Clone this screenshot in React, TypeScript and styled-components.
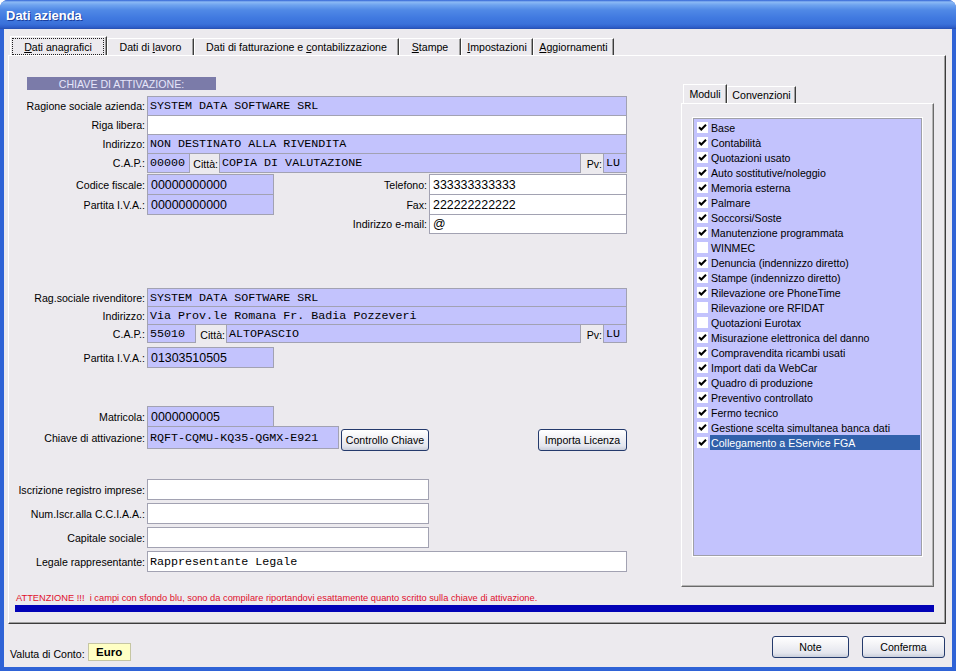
import React from 'react';
import styled, { createGlobalStyle } from 'styled-components';

const Global = createGlobalStyle`
  html, body { margin: 0; padding: 0; background: #ffffff; }
  #root { width: 956px; height: 671px; }
`;

const SANS = `"Liberation Sans", Arial, sans-serif`;
const MONO = `"Liberation Mono", "Courier New", monospace`;
const BG = '#ECEAEE';
const LAV = '#C3C3FD';

const Window = styled.div`
  width: 956px;
  height: 671px;
  box-sizing: border-box;
  display: flex;
  flex-direction: column;
  background: #2f63d6;
  border-radius: 8px 8px 0 0;
  overflow: hidden;
`;

const TitleBar = styled.div`
  height: 29px;
  flex: none;
  box-sizing: border-box;
  display: flex;
  align-items: center;
  padding: 2px 0 0 6px;
  background: linear-gradient(180deg, #2f62d4 0px, #8cbaf5 2px, #6ea3ef 5px, #5089e6 10px, #4079e0 18px, #3a71da 24px, #2f60cc 27px, #264fb0 29px);
  color: #ffffff;
  font: bold 13px ${SANS};
  text-shadow: 1px 1px 0 #1a3e9c;
`;

const Client = styled.div`
  flex: 1;
  margin: 0 4px 4px 4px;
  background: ${BG};
  display: flex;
  flex-direction: column;
  font-family: ${SANS};
  font-size: 10.6px;
  color: #000;
`;

const TabStrip = styled.div`
  display: flex;
  align-items: flex-end;
  height: 19px;
  margin: 7px 0 0 6px;
`;

const Tab = styled.div<{ $w: number; $active?: boolean; $h?: number }>`
  width: ${p => p.$w}px;
  height: ${p => (p.$h ? p.$h : p.$active ? 19 : 17)}px;
  box-sizing: border-box;
  flex: none;
  border-top: 1px solid #ffffff;
  border-left: 1px solid #ffffff;
  border-right: 1px solid #3c3c3c;
  box-shadow: inset -1px 0 0 #a0a0a0;
  display: flex;
  align-items: center;
  justify-content: center;
  white-space: pre;
  padding: ${p => (p.$active ? '1px 2px 0 1px' : '0')};
`;

const TabText = styled.span`
  white-space: pre;
`;

const Focus = styled.span`
  flex: 1;
  align-self: stretch;
  display: flex;
  align-items: center;
  justify-content: center;
  border: 1px dotted #202020;
`;

const Page = styled.div`
  margin: 0 6px 0 4px;
  height: 569px;
  box-sizing: border-box;
  border-top: 1px solid #ffffff;
  border-left: 1px solid #ffffff;
  border-right: 1px solid #3c3c3c;
  border-bottom: 1px solid #3c3c3c;
  box-shadow: inset -1px -1px 0 #a0a0a0;
  padding: 21px 11px 11px 6px;
  display: flex;
  flex-direction: column;
`;

const MainRow = styled.div`
  display: flex;
  height: 510px;
  flex: none;
`;

const LeftCol = styled.div`
  width: 612px;
  flex: none;
  display: flex;
  flex-direction: column;
`;

const SectionHeader = styled.div`
  margin-left: 12px;
  width: 189px;
  height: 13px;
  background: #7b7ba9;
  color: #e6e6fa;
  display: flex;
  align-items: center;
  justify-content: center;
  white-space: nowrap;
`;

const Row = styled.div<{ $h: number; $mt?: number }>`
  display: flex;
  height: ${p => p.$h}px;
  margin-top: ${p => p.$mt ?? 0}px;
  flex: none;
`;

const Label = styled.div<{ $w?: number }>`
  width: ${p => p.$w ?? 132}px;
  flex: none;
  box-sizing: border-box;
  padding-right: 2px;
  display: flex;
  align-items: center;
  justify-content: flex-end;
  white-space: nowrap;
`;

const InlineLabel = styled.div<{ $w: number }>`
  width: ${p => p.$w}px;
  flex: none;
  box-sizing: border-box;
  padding: 2px 1px 0 0;
  display: flex;
  align-items: center;
  justify-content: flex-end;
  white-space: nowrap;
`;

const Field = styled.div<{ $w: number; $white?: boolean; $mono?: boolean }>`
  width: ${p => p.$w}px;
  flex: none;
  box-sizing: border-box;
  border: 1px solid #a2a2b2;
  background: ${p => (p.$white ? '#ffffff' : LAV)};
  padding-left: ${p => (p.$mono ? 2 : 3)}px;
  display: flex;
  align-items: center;
  white-space: ${p => (p.$mono ? 'pre' : 'nowrap')};
  overflow: hidden;
  font-family: ${p => (p.$mono ? MONO : SANS)};
  font-size: ${p => (p.$mono ? '11.7px' : '12.4px')};
  color: #000;
`;

const TwoCols = styled.div`
  display: flex;
  margin-top: 1px;
`;

const SubCol = styled.div<{ $w: number }>`
  width: ${p => p.$w}px;
  flex: none;
  display: flex;
  flex-direction: column;
`;

const Button = styled.button<{ $w: number }>`
  width: ${p => p.$w}px;
  height: 22px;
  flex: none;
  box-sizing: border-box;
  border: 1px solid #243a6c;
  border-radius: 3px;
  background: linear-gradient(180deg, #ffffff 0%, #f4f4f7 35%, #e4e6ee 80%, #c9cedb 100%);
  font-family: ${SANS};
  font-size: 10.6px;
  color: #000;
  padding: 0;
  white-space: nowrap;
`;

const KeyButton = styled(Button)`
  margin: 3px 0 0 2px;
`;

const ImportButton = styled(Button)`
  margin: 3px 0 0 auto;
`;

const RightCol = styled.div`
  margin: 7px 0 0 54px;
  width: 253px;
  height: 503px;
  flex: none;
  display: flex;
  flex-direction: column;
`;

const InnerTabs = styled.div`
  display: flex;
  align-items: flex-end;
  height: 19px;
  padding-left: 2px;
  flex: none;
`;

const InnerPanel = styled.div`
  flex: 1;
  box-sizing: border-box;
  border-top: 1px solid #ffffff;
  border-left: 1px solid #ffffff;
  border-right: 1px solid #6a6a6a;
  border-bottom: 1px solid #6a6a6a;
  box-shadow: inset -1px -1px 0 #b4b4b4;
  padding: 14px 0 0 11px;
`;

const ListBox = styled.div`
  width: 229px;
  height: 438px;
  box-sizing: border-box;
  border: 1px solid #a0a0a8;
  box-shadow: 0 0 0 1px #ffffff;
  background: ${LAV};
  padding-top: 1px;
  display: flex;
  flex-direction: column;
`;

const Item = styled.div`
  height: 15px;
  display: flex;
  align-items: center;
  flex: none;
`;

const Box = styled.span`
  width: 11px;
  height: 11px;
  margin-left: 3px;
  flex: none;
  background: #ffffff;
  display: flex;
  align-items: center;
  justify-content: center;
`;

const ItemText = styled.span<{ $sel?: boolean }>`
  flex: 1;
  height: 15px;
  margin: 0 1px 0 2px;
  padding-left: 1px;
  display: flex;
  align-items: center;
  white-space: nowrap;
  background: ${p => (p.$sel ? '#3161ab' : 'transparent')};
  color: ${p => (p.$sel ? '#ffffff' : '#000')};
`;

const Warning = styled.div`
  margin-top: 6px;
  height: 11px;
  line-height: 11px;
  font-size: 9.3px;
  color: #e0102c;
  white-space: pre;
  padding-left: 1px;
`;

const BlueBar = styled.div`
  margin-top: 1px;
  height: 7px;
  background: #0202b6;
  flex: none;
`;

const Bottom = styled.div`
  flex: 1;
  display: flex;
  justify-content: space-between;
  align-items: flex-start;
`;

const Valuta = styled.div`
  display: flex;
  align-items: flex-end;
  gap: 3px;
  margin: 19px 0 0 6px;
  white-space: nowrap;
`;

const ValutaLabel = styled.span`
  line-height: 13px;
  font-size: 10.6px;
`;

const EuroBox = styled.div`
  width: 43px;
  height: 18px;
  box-sizing: border-box;
  border: 1px solid #c6c6a2;
  background: #ffffc4;
  display: flex;
  align-items: center;
  justify-content: center;
  font: bold 11.5px ${SANS};
`;

const Buttons = styled.div`
  display: flex;
  gap: 13px;
  margin: 12px 7px 0 0;
`;

const U = styled.span`
  text-decoration: underline;
`;

const Check: React.FC = () => (
  <svg width="9" height="9" viewBox="0 0 9 9">
    <path d="M1 4.2 L3.3 6.5 L8 1.8" fill="none" stroke="#000" strokeWidth="2" />
  </svg>
);

const modules: [string, boolean][] = [
  ['Base', true],
  ['Contabilità', true],
  ['Quotazioni usato', true],
  ['Auto sostitutive/noleggio', true],
  ['Memoria esterna', true],
  ['Palmare', true],
  ['Soccorsi/Soste', true],
  ['Manutenzione programmata', true],
  ['WINMEC', false],
  ['Denuncia (indennizzo diretto)', true],
  ['Stampe (indennizzo diretto)', true],
  ['Rilevazione ore PhoneTime', true],
  ['Rilevazione ore RFIDAT', false],
  ['Quotazioni Eurotax', false],
  ['Misurazione elettronica del danno', true],
  ['Compravendita ricambi usati', true],
  ['Import dati da WebCar', true],
  ['Quadro di produzione', true],
  ['Preventivo controllato', true],
  ['Fermo tecnico', true],
  ['Gestione scelta simultanea banca dati', true],
  ['Collegamento a EService FGA', true],
];

export default function App() {
  return (
    <>
      <Global />
      <Window>
        <TitleBar>Dati azienda</TitleBar>
        <Client>
          <TabStrip>
            <Tab $w={97} $active>
              <Focus><TabText><U>D</U>ati anagrafici</TabText></Focus>
            </Tab>
            <Tab $w={87}><TabText>Dati di <U>l</U>avoro</TabText></Tab>
            <Tab $w={205}><TabText>Dati di fatturazione e <U>c</U>ontabilizzazione</TabText></Tab>
            <Tab $w={62}><TabText><U>S</U>tampe</TabText></Tab>
            <Tab $w={72}><TabText><U>I</U>mpostazioni</TabText></Tab>
            <Tab $w={81}><TabText><U>A</U>ggiornamenti</TabText></Tab>
          </TabStrip>
          <Page>
            <MainRow>
              <LeftCol>
                <SectionHeader>CHIAVE DI ATTIVAZIONE:</SectionHeader>
                <Row $h={20} $mt={6}>
                  <Label>Ragione sociale azienda:</Label>
                  <Field $w={480} $mono>SYSTEM DATA SOFTWARE SRL</Field>
                </Row>
                <Row $h={20} $mt={-1}>
                  <Label>Riga libera:</Label>
                  <Field $w={480} $white />
                </Row>
                <Row $h={20} $mt={-1}>
                  <Label>Indirizzo:</Label>
                  <Field $w={480} $mono>NON DESTINATO ALLA RIVENDITA</Field>
                </Row>
                <Row $h={20} $mt={-1}>
                  <Label>C.A.P.:</Label>
                  <Field $w={43} $mono>00000</Field>
                  <InlineLabel $w={29}>Città:</InlineLabel>
                  <Field $w={362} $mono>COPIA DI VALUTAZIONE</Field>
                  <InlineLabel $w={22}>Pv:</InlineLabel>
                  <Field $w={24} $mono>LU</Field>
                </Row>
                <TwoCols>
                  <SubCol $w={334}>
                    <Row $h={21}>
                      <Label>Codice fiscale:</Label>
                      <Field $w={127}>00000000000</Field>
                    </Row>
                    <Row $h={21} $mt={-1}>
                      <Label>Partita I.V.A.:</Label>
                      <Field $w={127}>00000000000</Field>
                    </Row>
                  </SubCol>
                  <SubCol $w={278}>
                    <Row $h={21}>
                      <Label $w={80}>Telefono:</Label>
                      <Field $w={198} $white>333333333333</Field>
                    </Row>
                    <Row $h={21} $mt={-1}>
                      <Label $w={80}>Fax:</Label>
                      <Field $w={198} $white>222222222222</Field>
                    </Row>
                    <Row $h={20} $mt={-1}>
                      <Label $w={80}>Indirizzo e-mail:</Label>
                      <Field $w={198} $white>@</Field>
                    </Row>
                  </SubCol>
                </TwoCols>

                <Row $h={19} $mt={54}>
                  <Label>Rag.sociale rivenditore:</Label>
                  <Field $w={480} $mono>SYSTEM DATA SOFTWARE SRL</Field>
                </Row>
                <Row $h={19} $mt={-1}>
                  <Label>Indirizzo:</Label>
                  <Field $w={480} $mono>Via Prov.le Romana Fr. Badia Pozzeveri</Field>
                </Row>
                <Row $h={19} $mt={-1}>
                  <Label>C.A.P.:</Label>
                  <Field $w={49} $mono>55010</Field>
                  <InlineLabel $w={30}>Città:</InlineLabel>
                  <Field $w={355} $mono>ALTOPASCIO</Field>
                  <InlineLabel $w={22}>Pv:</InlineLabel>
                  <Field $w={24} $mono>LU</Field>
                </Row>
                <Row $h={21} $mt={4}>
                  <Label>Partita I.V.A.:</Label>
                  <Field $w={127}>01303510505</Field>
                </Row>

                <Row $h={21} $mt={38}>
                  <Label>Matricola:</Label>
                  <Field $w={127}>0000000005</Field>
                </Row>
                <Row $h={23} $mt={-1}>
                  <Label>Chiave di attivazione:</Label>
                  <Field $w={192} $mono>RQFT-CQMU-KQ35-QGMX-E921</Field>
                  <KeyButton $w={88}>Controllo Chiave</KeyButton>
                  <ImportButton $w={89}>Importa Licenza</ImportButton>
                </Row>

                <Row $h={21} $mt={30}>
                  <Label>Iscrizione registro imprese:</Label>
                  <Field $w={282} $white />
                </Row>
                <Row $h={21} $mt={3}>
                  <Label>Num.Iscr.alla C.C.I.A.A.:</Label>
                  <Field $w={282} $white />
                </Row>
                <Row $h={21} $mt={3}>
                  <Label>Capitale sociale:</Label>
                  <Field $w={282} $white />
                </Row>
                <Row $h={21} $mt={3}>
                  <Label>Legale rappresentante:</Label>
                  <Field $w={480} $white $mono>Rappresentante Legale</Field>
                </Row>
              </LeftCol>

              <RightCol>
                <InnerTabs>
                  <Tab $w={44} $h={19}>Moduli</Tab>
                  <Tab $w={69} $h={17}>Convenzioni</Tab>
                </InnerTabs>
                <InnerPanel>
                  <ListBox>
                    {modules.map(([name, on], i) => (
                      <Item key={name}>
                        <Box>{on && <Check />}</Box>
                        <ItemText $sel={i === modules.length - 1}>{name}</ItemText>
                      </Item>
                    ))}
                  </ListBox>
                </InnerPanel>
              </RightCol>
            </MainRow>
            <Warning>{'ATTENZIONE !!!  i campi con sfondo blu, sono da compilare riportandovi esattamente quanto scritto sulla chiave di attivazione.'}</Warning>
            <BlueBar />
          </Page>
          <Bottom>
            <Valuta>
              <ValutaLabel>Valuta di Conto:</ValutaLabel>
              <EuroBox>Euro</EuroBox>
            </Valuta>
            <Buttons>
              <Button $w={77}>Note</Button>
              <Button $w={83}>Conferma</Button>
            </Buttons>
          </Bottom>
        </Client>
      </Window>
    </>
  );
}
